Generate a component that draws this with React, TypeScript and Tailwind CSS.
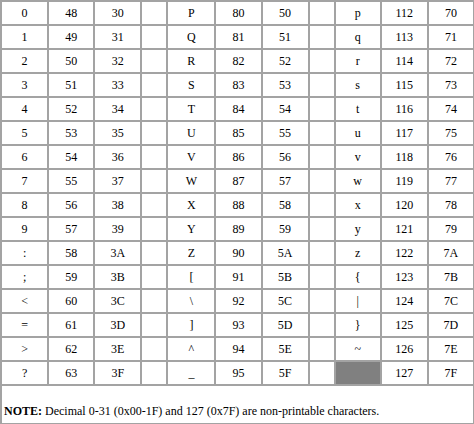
import React from "react";

const widths = [47, 46, 47, 26, 48, 46, 47, 26, 46, 47, 46];

const rows = Array.from({ length: 16 }, (_, i) => {
  const a = 48 + i;
  const b = 80 + i;
  const c = 112 + i;
  const hex = (n: number) => n.toString(16).toUpperCase();
  return [
    String.fromCharCode(a),
    String(a),
    hex(a),
    "",
    String.fromCharCode(b),
    String(b),
    hex(b),
    "",
    c === 127 ? null : String.fromCharCode(c),
    String(c),
    hex(c),
  ];
});

const cellCls =
  "border-2 border-[#a3a3a3] text-center align-middle p-0 leading-none font-['Liberation_Serif',serif] text-[12px]";

const App: React.FC = () => {
  return (
    <div className="w-[474px] h-[424px] bg-white overflow-hidden text-[12px] text-black">
      <table className="border-collapse table-fixed w-[475px] text-[12px] font-['Liberation_Serif',serif]">
        <colgroup>
          {widths.map((w, i) => (
            <col key={i} style={{ width: w }} />
          ))}
        </colgroup>
        <tbody>
          {rows.map((row, r) => (
            <tr key={r} className="h-[24px]">
              {row.map((cell, c) =>
                cell === null ? (
                  <td key={c} className="border-2 border-[#a3a3a3] bg-[#808080]" />
                ) : (
                  <td key={c} className={cellCls}>
                    {cell}
                  </td>
                )
              )}
            </tr>
          ))}
          <tr className="h-[39px]">
            <td
              colSpan={11}
              className="border-2 border-[#a3a3a3] align-bottom px-[2px] pb-[6px] leading-none font-['Liberation_Serif',serif] text-[12px]"
            >
              <b>NOTE:</b> Decimal 0-31 (0x00-1F) and 127 (0x7F) are non-printable characters.
            </td>
          </tr>
        </tbody>
      </table>
    </div>
  );
};

export default App;
